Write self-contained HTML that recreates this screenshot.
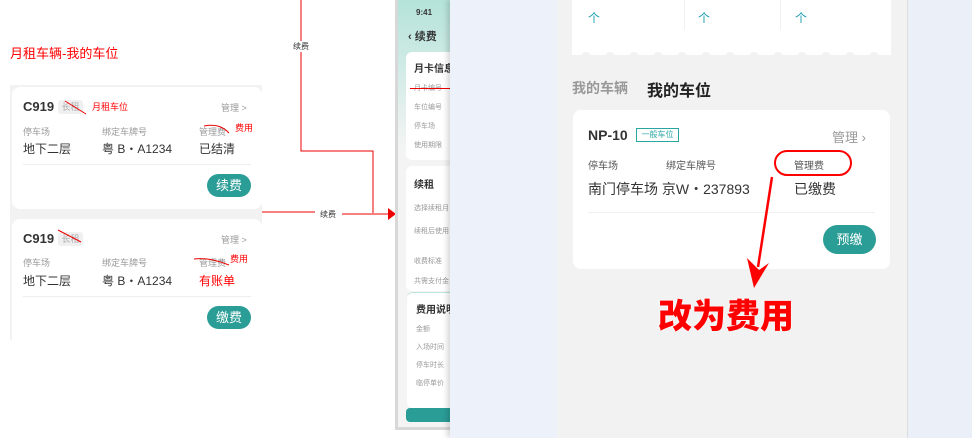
<!DOCTYPE html>
<html><head><meta charset="utf-8"><style>
*{margin:0;padding:0;box-sizing:border-box}
body{width:972px;height:438px;position:relative;overflow:hidden;background:#fff;font-family:"Liberation Sans","Noto Sans CJK SC",sans-serif;color:#333}
.a{position:absolute;white-space:nowrap}
.card{position:absolute;background:#fff;border-radius:8px}
.g{color:#999}
.r{color:#f00}
.btn{position:absolute;background:#2a9d96;color:#fff;border-radius:12px;font-size:13px;text-align:center}
</style></head><body>
<!-- left section -->
<div class="a r" style="left:10px;top:43px;font-size:13px">月租车辆-我的车位</div>
<div class="a" style="left:10px;top:85px;width:252px;height:255px;background:#f2f2f2"></div>
<div class="card" style="left:12px;top:87px;width:250px;height:122px"></div>
<div class="card" style="left:12px;top:219px;width:250px;height:121px;border-radius:8px 8px 0 0"></div>
<div class="a" style="left:23px;top:99px;font-size:13px;font-weight:bold;color:#333">C919</div>
<div class="a" style="left:58px;top:100px;width:25px;height:14px;background:#f0f0f0;border-radius:3px;font-size:9px;color:#aaa;text-align:center;line-height:14px">长租</div>
<div class="a r" style="left:92px;top:100px;font-size:9px">月租车位</div>
<div class="a g" style="left:221px;top:101px;font-size:9px">管理 &gt;</div>
<div class="a g" style="left:23px;top:125px;font-size:9px">停车场</div>
<div class="a g" style="left:102px;top:125px;font-size:9px">绑定车牌号</div>
<div class="a g" style="left:199px;top:125px;font-size:9px">管理费</div>
<div class="a r" style="left:235px;top:121px;font-size:9px">费用</div>
<div class="a" style="left:23px;top:140px;font-size:12px">地下二层</div>
<div class="a" style="left:102px;top:140px;font-size:12px">粤 B・A1234</div>
<div class="a" style="left:199px;top:140px;font-size:12px">已结清</div>
<div class="a" style="left:23px;top:164px;width:228px;height:1px;background:#eee"></div>
<div class="btn" style="left:207px;top:174px;width:44px;height:23px;line-height:23px">续费</div>
<div class="a" style="left:23px;top:231px;font-size:13px;font-weight:bold">C919</div>
<div class="a" style="left:58px;top:232px;width:25px;height:14px;background:#f0f0f0;border-radius:3px;font-size:9px;color:#aaa;text-align:center;line-height:14px">长租</div>
<div class="a g" style="left:221px;top:233px;font-size:9px">管理 &gt;</div>
<div class="a g" style="left:23px;top:256px;font-size:9px">停车场</div>
<div class="a g" style="left:102px;top:256px;font-size:9px">绑定车牌号</div>
<div class="a g" style="left:199px;top:256px;font-size:9px">管理费</div>
<div class="a r" style="left:230px;top:252px;font-size:9px">费用</div>
<div class="a" style="left:23px;top:272px;font-size:12px">地下二层</div>
<div class="a" style="left:102px;top:272px;font-size:12px">粤 B・A1234</div>
<div class="a r" style="left:199px;top:272px;font-size:12px">有账单</div>
<div class="a" style="left:23px;top:296px;width:228px;height:1px;background:#eee"></div>
<div class="btn" style="left:207px;top:306px;width:44px;height:23px;line-height:23px">缴费</div>
<svg class="a" style="left:0;top:0" width="400" height="340">
<g stroke="#e00" fill="none" stroke-width="1">
<path d="M65 101 L86 114"/><path d="M204 126 Q220 123 229 133"/>
<path d="M58 230 L81 242"/><path d="M194 259 Q210 257 229 265"/>
<path d="M301 0 V151 H373 V213"/><path d="M262 212 H315"/><path d="M342 214 H390"/>
</g>
<path d="M388 208 L396 214 L388 220Z" fill="#e00"/>
</svg>
<div class="a" style="left:293px;top:41px;font-size:8px;background:#fff;color:#333">续费</div>
<div class="a" style="left:320px;top:209px;font-size:8px;color:#333">续费</div>
<!-- middle phone -->
<div class="a" style="left:395px;top:0;width:60px;height:430px;background:#d8d8d8"></div>
<div class="a" style="left:398px;top:0;width:57px;height:427px;background:linear-gradient(#b4e3da,#f4f4f4 150px,#f4f4f4)"></div>
<div class="a" style="left:416px;top:8px;font-size:8px;font-weight:bold">9:41</div>
<div class="a" style="left:408px;top:28px;font-size:11px;font-weight:bold">‹ 续费</div>
<div class="a" style="left:406px;top:52px;width:50px;height:108px;background:#fff;border-radius:6px"></div>
<div class="a" style="left:414px;top:60px;font-size:10px;font-weight:bold">月卡信息</div>
<div class="a g" style="left:414px;top:83px;font-size:7px">月卡编号</div>
<div class="a" style="left:410px;top:88px;width:45px;height:1px;background:#e00"></div>
<div class="a g" style="left:414px;top:102px;font-size:7px">车位编号</div>
<div class="a g" style="left:414px;top:121px;font-size:7px">停车场</div>
<div class="a g" style="left:414px;top:140px;font-size:7px">使用期限</div>
<div class="a" style="left:406px;top:166px;width:50px;height:125px;background:#fff;border-radius:6px"></div>
<div class="a" style="left:414px;top:176px;font-size:10px;font-weight:bold">续租</div>
<div class="a g" style="left:414px;top:203px;font-size:7px">选择续租月</div>
<div class="a g" style="left:414px;top:226px;font-size:7px">续租后使用</div>
<div class="a g" style="left:414px;top:256px;font-size:7px">收费标准</div>
<div class="a g" style="left:414px;top:276px;font-size:7px">共需支付金</div>
<div class="a" style="left:407px;top:292px;width:49px;height:116px;background:#fff;border-radius:6px;border-top:1px solid #bde5de"></div>
<div class="a" style="left:416px;top:301px;font-size:10px;font-weight:bold">费用说明</div>
<div class="a g" style="left:416px;top:324px;font-size:7px">金额</div>
<div class="a g" style="left:416px;top:342px;font-size:7px">入场时间</div>
<div class="a g" style="left:416px;top:360px;font-size:7px">停车时长</div>
<div class="a g" style="left:416px;top:378px;font-size:7px">临停单价</div>
<div class="a" style="left:406px;top:408px;width:50px;height:14px;background:#2a9d96;border-radius:4px"></div>
<!-- panel -->
<div class="a" style="left:450px;top:0;width:108px;height:438px;background:#edf1f9;box-shadow:-3px 0 5px rgba(0,0,0,.15)"></div>
<div class="a" style="left:557px;top:0;width:350px;height:438px;background:#f2f2f2"></div>
<div class="a" style="left:907px;top:0;width:65px;height:438px;background:#ebeff8;border-left:1px solid #ddd"></div>
<!-- top card -->
<div class="a" style="left:572px;top:0;width:319px;height:55px;background:#fff"></div>
<svg class="a" style="left:572px;top:48px" width="320" height="12">
<g fill="#f2f2f2"><rect x="0" y="9" width="320" height="3"/>
<circle cx="-4" cy="9" r="5"/><circle cx="14" cy="9" r="5"/><circle cx="38" cy="9" r="5"/><circle cx="62" cy="9" r="5"/><circle cx="86" cy="9" r="5"/><circle cx="110" cy="9" r="5"/><circle cx="134" cy="9" r="5"/><circle cx="158" cy="9" r="5"/><circle cx="182" cy="9" r="5"/><circle cx="206" cy="9" r="5"/><circle cx="230" cy="9" r="5"/><circle cx="254" cy="9" r="5"/><circle cx="278" cy="9" r="5"/><circle cx="302" cy="9" r="5"/><circle cx="324" cy="9" r="5"/></g></svg>
<div class="a" style="left:684px;top:0;width:1px;height:30px;background:#f0f0f0"></div>
<div class="a" style="left:780px;top:0;width:1px;height:30px;background:#f0f0f0"></div>
<div class="a" style="left:588px;top:9px;font-size:12px;color:#20a0b0">个</div>
<div class="a" style="left:698px;top:9px;font-size:12px;color:#20a0b0">个</div>
<div class="a" style="left:795px;top:9px;font-size:12px;color:#20a0b0">个</div>
<div class="a" style="left:572px;top:78px;font-size:14px;font-weight:bold;color:#999">我的车辆</div>
<div class="a" style="left:647px;top:77px;font-size:16px;font-weight:bold;color:#222">我的车位</div>
<div class="card" style="left:573px;top:110px;width:317px;height:159px"></div>
<div class="a" style="left:588px;top:127px;font-size:14px;font-weight:bold">NP-10</div>
<div class="a" style="left:636px;top:128px;width:43px;height:14px;border:1px solid #2aa6a0;color:#2aa6a0;font-size:8px;text-align:center;line-height:12px">一般车位</div>
<div class="a g" style="left:832px;top:127px;font-size:13px">管理 ›</div>
<div class="a" style="left:588px;top:157px;font-size:10px;color:#555">停车场</div>
<div class="a" style="left:666px;top:157px;font-size:10px;color:#555">绑定车牌号</div>
<div class="a" style="left:794px;top:157px;font-size:10px;color:#555">管理费</div>
<div class="a" style="left:774px;top:150px;width:78px;height:26px;border:2px solid #f00;border-radius:13px"></div>
<div class="a" style="left:588px;top:179px;font-size:14px;color:#333">南门停车场 京W・237893</div>
<div class="a" style="left:794px;top:179px;font-size:14px;color:#333">已缴费</div>
<div class="a" style="left:588px;top:212px;width:287px;height:1px;background:#f0f0f0"></div>
<div class="btn" style="left:823px;top:225px;width:53px;height:29px;line-height:29px;border-radius:15px;font-size:13px">预缴</div>
<svg class="a" style="left:740px;top:175px" width="40" height="115"><path d="M32 2 L18 92" stroke="#f00" stroke-width="2.5" fill="none"/><path d="M7 83 L14 113 L29 88 L19 95Z" fill="#f00"/></svg>
<div class="a" style="left:658px;top:289px;font-size:34px;font-weight:900;color:#f00;letter-spacing:0px;text-shadow:0 0 2px #fff">改为费用</div>
</body></html>
